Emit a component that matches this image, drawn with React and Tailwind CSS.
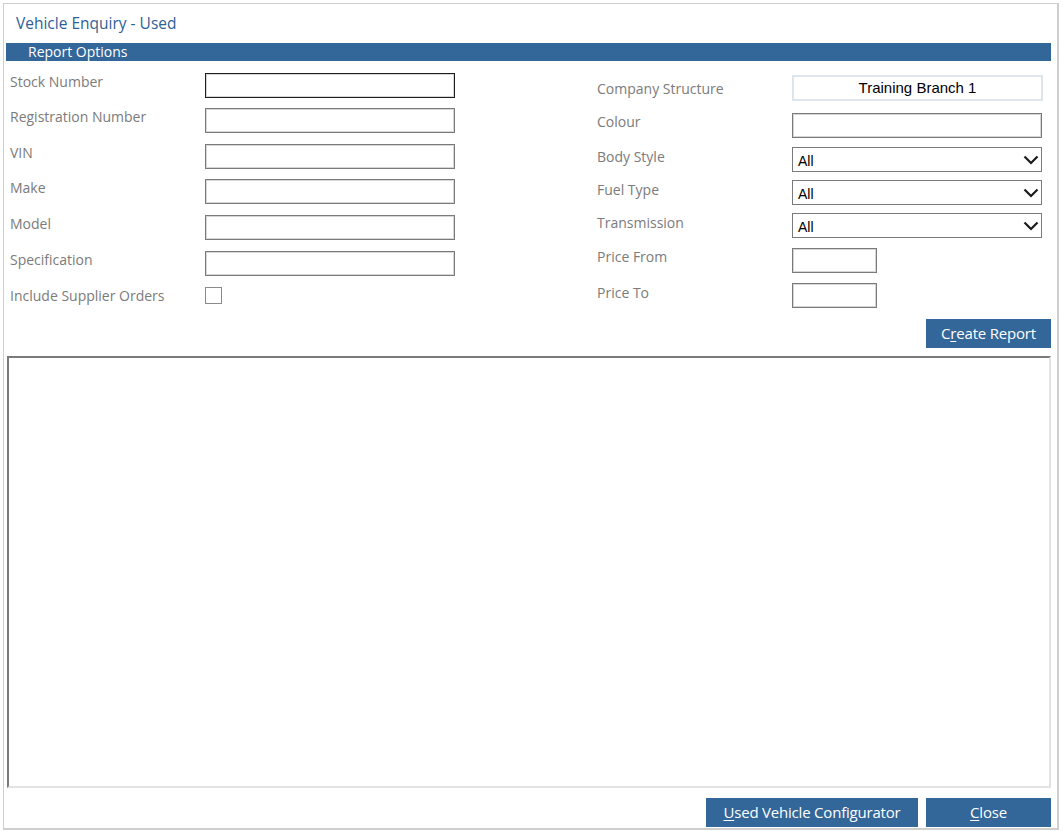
import React from 'react';

const labelFont = { fontFamily: '"Open Sans", "Noto Sans", sans-serif' };

const TextBox = ({ width = 'w-[250px]', dark = false }) => (
  <div
    className={`${width} h-[25px] bg-white border ${
      dark ? 'border-[#1e1e1e]' : 'border-[#7a7a7a]'
    } shadow-[inset_0_0_0_1px_#d6d6d6]`}
  />
);

const Chevron = () => (
  <svg width="16" height="10" viewBox="0 0 16 10" className="block">
    <polyline points="1.5,1.5 8,8 14.5,1.5" fill="none" stroke="#1a1a1a" strokeWidth="2.2" />
  </svg>
);

const SelectBox = ({ value }) => (
  <div className="w-[250px] h-[25px] bg-white border border-[#7a7a7a] flex items-center justify-between pl-[5px] pr-[2px]">
    <span className="text-[14px] text-black pt-[3px]" style={{ fontFamily: '"Liberation Sans", Arial, sans-serif' }}>
      {value}
    </span>
    <Chevron />
  </div>
);

const Label = ({ children, pt = 'pt-0' }) => (
  <div className={`w-[195px] shrink-0 text-[14px] leading-[17px] text-[#7b7b7b] ${pt}`} style={labelFont}>
    {children}
  </div>
);

const BlueButton = ({ children, width }) => (
  <button
    type="button"
    className={`${width} h-[29px] bg-[#336699] text-white text-[15px] tracking-[-0.2px] flex items-center justify-center`}
    style={labelFont}
  >
    {children}
  </button>
);

export default function App() {
  const leftRows = ['Stock Number', 'Registration Number', 'VIN', 'Make', 'Model', 'Specification'];
  const leftTops = ['mt-0', 'mt-[10px]', 'mt-[11px]', 'mt-[10px]', 'mt-[11px]', 'mt-[11px]'];

  return (
    <div className="w-[1063px] h-[831px] bg-white pt-[3px] pl-[3px]">
      <div className="w-[1056px] h-[827px] border-l border-t border-b-2 border-r-2 border-[#cfcfcf] pl-[2px] pr-[6px] flex flex-col">
        <div className="h-[39px] pl-[10px] flex items-center text-[15.5px] text-[#2f5f93]" style={labelFont}>
          Vehicle Enquiry - Used
        </div>
        <div className="h-[18px] bg-[#336699] pl-[22px] flex items-center text-[14px] text-white leading-none" style={labelFont}>
          Report Options
        </div>

        <div className="flex pt-[12px] pl-[4px]">
          <div className="w-[587px] flex flex-col">
            {leftRows.map((l, i) => (
              <div key={l} className={`flex items-start ${leftTops[i]}`}>
                <Label pt={i === 0 ? 'pt-0' : 'pt-0'}>{l}</Label>
                <TextBox dark={i === 0} />
              </div>
            ))}
            <div className="flex items-start mt-[11px]">
              <Label>Include Supplier Orders</Label>
              <div className="w-[17px] h-[17px] border border-[#8a8a8a] bg-white" />
            </div>
          </div>

          <div className="flex flex-col">
            <div className="flex items-start mt-[2px]">
              <Label pt="pt-[5px]">Company Structure</Label>
              <div
                className="w-[251px] h-[26px] border-2 border-[#dfe5ec] bg-white flex items-center justify-center text-[15px] text-black"
                style={{ fontFamily: '"Liberation Sans", Arial, sans-serif' }}
              >
                Training Branch 1
              </div>
            </div>
            <div className="flex items-start mt-[12px]">
              <Label pt="pt-0">Colour</Label>
              <TextBox />
            </div>
            <div className="flex items-start mt-[9px]">
              <Label pt="pt-[1px]">Body Style</Label>
              <SelectBox value="All" />
            </div>
            <div className="flex items-start mt-[8px]">
              <Label pt="pt-[1px]">Fuel Type</Label>
              <SelectBox value="All" />
            </div>
            <div className="flex items-start mt-[8px]">
              <Label pt="pt-[1px]">Transmission</Label>
              <SelectBox value="All" />
            </div>
            <div className="flex items-start mt-[10px]">
              <Label pt="pt-0">Price From</Label>
              <TextBox width="w-[85px]" />
            </div>
            <div className="flex items-start mt-[10px]">
              <Label pt="pt-[1px]">Price To</Label>
              <TextBox width="w-[85px]" />
            </div>
          </div>
        </div>

        <div className="flex justify-end mt-[11px]">
          <BlueButton width="w-[125px]">
            C<span className="underline underline-offset-2">r</span>eate Report
          </BlueButton>
        </div>

        <div className="mt-[8px] ml-[1px] h-[432px] border-t-2 border-l-2 border-t-[#7a7a7a] border-l-[#7a7a7a] border-b-2 border-r-2 border-b-[#e2e2e2] border-r-[#e2e2e2] bg-white" />

        <div className="flex justify-end gap-[8px] mt-[10px]">
          <BlueButton width="w-[212px]">
            <span className="underline underline-offset-2">U</span>sed Vehicle Configurator
          </BlueButton>
          <BlueButton width="w-[125px]">
            <span className="underline underline-offset-2">C</span>lose
          </BlueButton>
        </div>
      </div>
    </div>
  );
}
